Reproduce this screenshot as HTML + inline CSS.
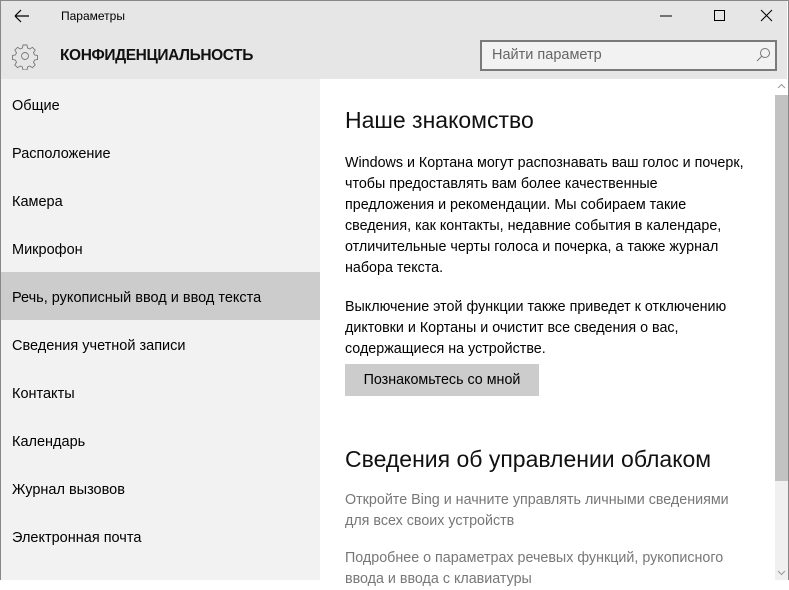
<!DOCTYPE html>
<html><head><meta charset="utf-8"><style>
*{margin:0;padding:0;box-sizing:border-box}
body{width:789px;height:580px;overflow:hidden;font-family:"Liberation Sans",sans-serif;background:#fff;position:relative;color:#000}
.win{position:absolute;left:0;top:0;width:789px;height:580px;border:1px solid #888;border-bottom:none}
.hdr{position:absolute;left:0;top:0;width:787px;height:79px;background:#e6e6e6}
.t{position:absolute;white-space:nowrap}
.side{position:absolute;left:0;top:79px;width:320px;height:501px;background:#f2f2f2}
.item{position:absolute;left:0;width:320px;height:48px;font-size:14.5px;line-height:48px;padding-left:12px;padding-top:2px}
.sel{background:#ccc}
.content{position:absolute;left:320px;top:79px;width:455px;height:501px;background:#fff}
.p{position:absolute;left:25px;font-size:14.3px;line-height:21px;white-space:nowrap}
.btn{position:absolute;left:25px;top:285px;width:194px;height:32px;background:#ccc;font-size:14.3px;line-height:32px;text-align:center}
.sb{position:absolute;left:775px;top:79px;width:13px;height:501px;background:#f0f0f0}
.thumb{position:absolute;left:775px;top:95px;width:13px;height:386px;background:#c2c2c2}
</style></head><body>
<div class="hdr"></div>
<svg class="t" style="left:12px;top:8px" width="20" height="16"><path d="M3 8H17M3 8L9 2M3 8L9 14" stroke="#000" stroke-width="1.2" fill="none"/></svg>
<div class="t" style="left:61px;top:9px;font-size:12px">Параметры</div>
<svg class="t" style="left:660px;top:8px" width="120" height="16"><path d="M0 8H12" stroke="#000" stroke-width="1"/><rect x="54.5" y="2.5" width="10" height="10" fill="none" stroke="#000"/><path d="M101 2L112 13M112 2L101 13" stroke="#000" stroke-width="1"/></svg>
<svg class="t" style="left:11px;top:42px" width="28" height="28" viewBox="0 0 28 28"><g fill="none" stroke="#777" stroke-width="0.9"><circle cx="14" cy="14" r="3.5"/><path d="M12 3h4l.6 3 2.2 1 2.6-1.7 2.8 2.8-1.7 2.6 1 2.2 3 .6v4l-3 .6-1 2.2 1.7 2.6-2.8 2.8-2.6-1.7-2.2 1-.6 3h-4l-.6-3-2.2-1-2.6 1.7-2.8-2.8 1.7-2.6-1-2.2-3-.6v-4l3-.6 1-2.2-1.7-2.6 2.8-2.8 2.6 1.7 2.2-1z"/></g></svg>
<div class="t" style="left:60px;top:47px;font-size:15.5px;font-weight:bold;letter-spacing:-0.4px;color:#111">КОНФИДЕНЦИАЛЬНОСТЬ</div>
<div class="t" style="left:480px;top:40px;width:297px;height:31px;border:2px solid #7a7a7a;background:#f2f2f2"></div>
<div class="t" style="left:492px;top:47px;font-size:14.5px;color:#666">Найти параметр</div>
<svg class="t" style="left:755px;top:47px" width="16" height="16"><circle cx="10" cy="6" r="4.5" fill="none" stroke="#777"/><path d="M7 9L2 14" stroke="#777"/></svg>
<div class="side">
<div class="item" style="top:1px">Общие</div>
<div class="item" style="top:49px">Расположение</div>
<div class="item" style="top:97px">Камера</div>
<div class="item" style="top:145px">Микрофон</div>
<div class="item sel" style="top:193px">Речь, рукописный ввод и ввод текста</div>
<div class="item" style="top:241px">Сведения учетной записи</div>
<div class="item" style="top:289px">Контакты</div>
<div class="item" style="top:337px">Календарь</div>
<div class="item" style="top:385px">Журнал вызовов</div>
<div class="item" style="top:433px">Электронная почта</div>
</div>
<div class="content">
<div class="p" style="top:26px;font-size:23px;line-height:30px;color:#111">Наше знакомство</div>
<div class="p" style="top:74px">Windows и Кортана могут распознавать ваш голос и почерк,<br>чтобы предоставлять вам более качественные<br>предложения и рекомендации. Мы собираем такие<br>сведения, как контакты, недавние события в календаре,<br>отличительные черты голоса и почерка, а также журнал<br>набора текста.</div>
<div class="p" style="top:218px">Выключение этой функции также приведет к отключению<br>диктовки и Кортаны и очистит все сведения о вас,<br>содержащиеся на устройстве.</div>
<div class="btn">Познакомьтесь со мной</div>
<div class="p" style="top:365px;font-size:23px;line-height:30px;color:#111">Сведения об управлении облаком</div>
<div class="p" style="top:411px;color:#777">Откройте Bing и начните управлять личными сведениями<br>для всех своих устройств</div>
<div class="p" style="top:469px;color:#777">Подробнее о параметрах речевых функций, рукописного<br>ввода и ввода с клавиатуры</div>
</div>
<div class="sb"></div>
<div class="t" style="left:775px;top:79px;width:13px;height:16px;background:#fff"></div>
<svg class="t" style="left:777px;top:83px" width="9" height="6"><path d="M1 5L4.5 1.5L8 5" stroke="#999" fill="none"/></svg>
<div class="thumb"></div>
<svg class="t" style="left:777px;top:570px" width="9" height="6"><path d="M1 1L4.5 4.5L8 1" stroke="#999" fill="none"/></svg>
<div class="win"></div>
</body></html>
